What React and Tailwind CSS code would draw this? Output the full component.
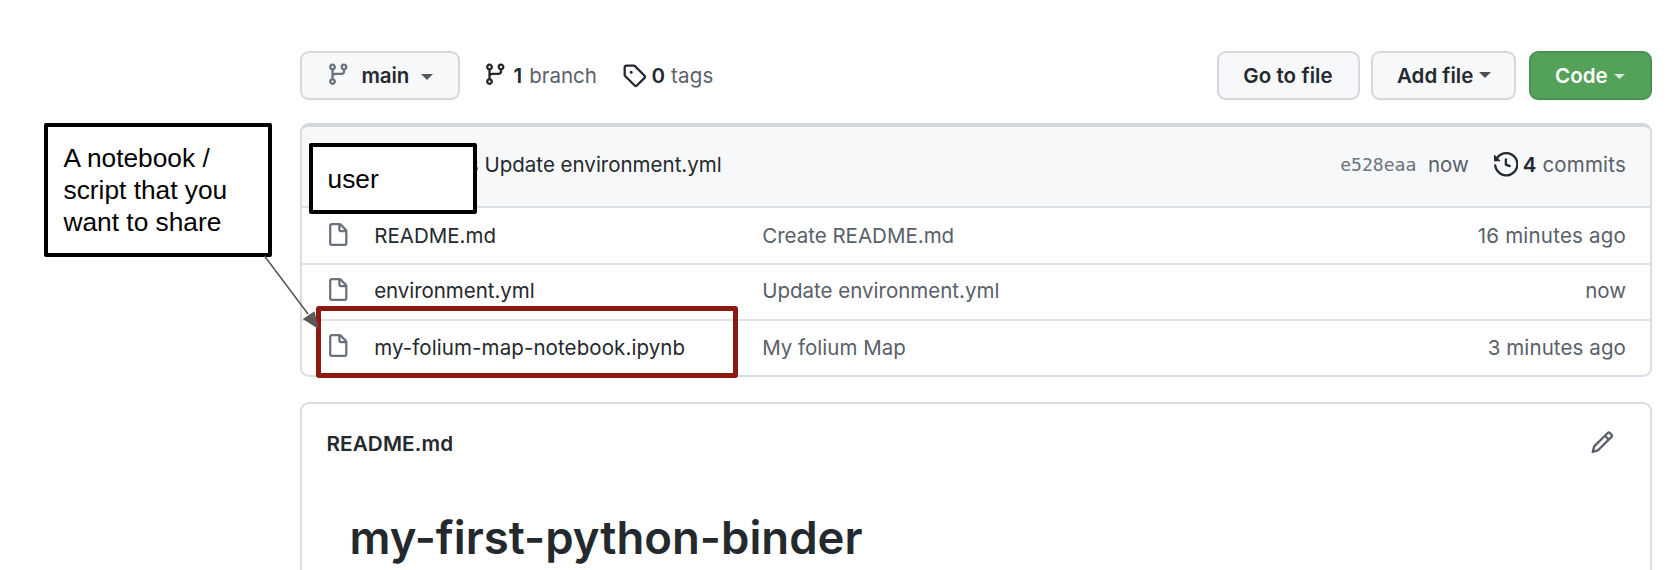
const ICONS = {
  branch:
    "M11.75 2.5a.75.75 0 100 1.5.75.75 0 000-1.5zm-2.25.75a2.25 2.25 0 113 2.122V6A2.5 2.5 0 0110 8.5H6a1 1 0 00-1 1v1.128a2.251 2.251 0 11-1.5 0V5.372a2.25 2.25 0 111.5 0v1.836A2.492 2.492 0 016 7h4a1 1 0 001-1v-.628A2.25 2.25 0 019.5 3.25zM4.25 12a.75.75 0 100 1.5.75.75 0 000-1.5zM3.5 3.25a.75.75 0 111.5 0 .75.75 0 01-1.5 0z",
  tag: "M2.5 7.775V2.75a.25.25 0 01.25-.25h5.025a.25.25 0 01.177.073l6.25 6.25a.25.25 0 010 .354l-5.025 5.025a.25.25 0 01-.354 0l-6.25-6.25a.25.25 0 01-.073-.177zm-1.5 0V2.75C1 1.784 1.784 1 2.75 1h5.025c.464 0 .91.184 1.238.513l6.25 6.25a1.75 1.75 0 010 2.474l-5.026 5.026a1.75 1.75 0 01-2.474 0l-6.25-6.25A1.75 1.75 0 011 7.775zM6 5a1 1 0 100 2 1 1 0 000-2z",
  file: "M3.75 1.5a.25.25 0 00-.25.25v11.5c0 .138.112.25.25.25h8.5a.25.25 0 00.25-.25V6H9.75A1.75 1.75 0 018 4.25V1.5H3.75zm5.75.56v2.19c0 .138.112.25.25.25h2.19L9.5 2.06zM2 1.75C2 .784 2.784 0 3.75 0h5.086c.464 0 .909.184 1.237.513l3.414 3.414c.329.328.513.773.513 1.237v8.086A1.75 1.75 0 0112.25 15h-8.5A1.75 1.75 0 012 13.25V1.75z",
  history:
    "M1.643 3.143L.427 1.927A.25.25 0 000 2.104V5.75c0 .138.112.25.25.25h3.646a.25.25 0 00.177-.427L2.715 4.215a6.5 6.5 0 11-1.18 4.458.75.75 0 10-1.493.154 8.001 8.001 0 101.6-5.684zM7.75 4a.75.75 0 01.75.75v2.992l2.028.812a.75.75 0 01-.557 1.392l-2.5-1A.75.75 0 017 8.25v-3.5A.75.75 0 017.75 4z",
  pencil:
    "M11.013 1.427a1.75 1.75 0 012.474 0l1.086 1.086a1.75 1.75 0 010 2.474l-8.61 8.61c-.21.21-.47.364-.756.445l-3.251.93a.75.75 0 01-.927-.928l.929-3.25a1.75 1.75 0 01.445-.758l8.61-8.61zm1.414 1.06a.25.25 0 00-.354 0L10.811 3.75l1.439 1.44 1.263-1.263a.25.25 0 000-.354l-1.086-1.086zM11.189 6.25L9.75 4.81l-6.286 6.287a.25.25 0 00-.064.108l-.558 1.953 1.953-.558a.249.249 0 00.108-.064l6.286-6.286z",
};

function Icon({ name, className = "" }) {
  return (
    <svg viewBox="0 0 16 16" className={`size-[24.5px] shrink-0 ${className}`} fill="currentColor">
      <path fillRule="evenodd" d={ICONS[name]} />
    </svg>
  );
}

function Caret({ className = "h-[6px] w-[12px]" }) {
  return (
    <svg viewBox="0 0 12 6" preserveAspectRatio="none" className={`shrink-0 ${className}`} fill="currentColor">
      <path d="M0 0h12L6 6z" />
    </svg>
  );
}

const BUTTON_TONES = {
  plain: "border-[#d5d9dd] bg-[#f6f8fa]",
  primary: "border-[#4a934f] bg-[#54a15a] text-white",
};

function Button({ tone = "plain", className = "", children }) {
  return (
    <button
      className={`flex h-[49px] shrink-0 items-center rounded-[9px] border-2 font-semibold shadow-[0_1px_1px_rgba(27,31,35,0.05)] ${BUTTON_TONES[tone]} ${className}`}
    >
      {children}
    </button>
  );
}

const FILES = [
  { name: "README.md", message: "Create README.md", age: "16 minutes ago", row: "h-[56.5px] border-b-2 pt-[1.5px]", tracking: "tracking-[0.02px]", ageTracking: "tracking-[0.2px]" },
  { name: "environment.yml", message: "Update environment.yml", age: "now", row: "h-[56.5px] border-b-2 pb-[2px]", tracking: "tracking-[-0.05px]", ageTracking: "" },
  { name: "my-folium-map-notebook.ipynb", message: "My folium Map", age: "3 minutes ago", row: "h-[55px] pb-[2px]", tracking: "tracking-[0.09px]", ageTracking: "tracking-[0.1px]" },
];

function Toolbar() {
  return (
    <div className="flex h-[49px] items-center">
      <Button className="w-[160px] pl-[24px]">
        <Icon name="branch" className="mt-[-2px] text-[#6a737d]" />
        <span className="ml-[11px] tracking-[-0.1px]">main</span>
        <Caret className="mt-[2px] ml-[12px] h-[6px] w-[12px] text-[#55595e]" />
      </Button>
      <Icon name="branch" className="mt-[-2px] ml-[22.5px]" />
      <span className="ml-[6.5px] font-semibold">1</span>
      <span className="ml-[7px] text-[#586069]">branch</span>
      <Icon name="tag" className="ml-[25px]" />
      <span className="ml-[5px] font-semibold">0</span>
      <span className="ml-[6px] tracking-[0.2px] text-[#586069]">tags</span>
      <div className="ml-auto flex">
        <Button className="w-[143px] justify-center">
          <span className="tracking-[0.1px]">Go to file</span>
        </Button>
        <Button className="ml-[11px] w-[145px] pl-[24.5px]">
          <span>Add file</span>
          <Caret className="mt-[-2px] ml-[6px] h-[6px] w-[12px] text-[#4b4f55]" />
        </Button>
        <Button tone="primary" className="ml-[13.5px] w-[123px] pl-[24px]">
          <span className="tracking-[0.05px]">Code</span>
          <Caret className="mt-[2px] ml-[6px] h-[5px] w-[11px] text-[#d9ebda]" />
        </Button>
      </div>
    </div>
  );
}

function FileTable() {
  return (
    <section className="mt-[23px] h-[254px] overflow-hidden rounded-[9px] border-2 border-t-4 border-[#d8dde3] border-t-[#d1d7dd]">
      <header className="flex h-[81px] items-center border-b-2 border-[#dadfe4] bg-[#f6f8fa] pr-[24px] pb-[4px]">
        <span className="ml-[127px] w-[49.5px] text-right">s</span>
        <span className="ml-[6px]">Update environment.yml</span>
        <span className="ml-auto font-['DejaVu_Sans_Mono',monospace] text-[18.1px] text-[#6a737d]">e528eaa</span>
        <span className="ml-[11.5px] text-[#586069]">now</span>
        <Icon name="history" className="ml-[25px]" />
        <span className="ml-[4.5px] font-semibold">4</span>
        <span className="ml-[6px] tracking-[0.2px] text-[#586069]">commits</span>
      </header>
      {FILES.map((f) => (
        <div key={f.name} className={`flex items-center border-[#dfe3e8] pr-[24px] pl-[24px] ${f.row}`}>
          <Icon name="file" className="mt-[-2px] text-[#6a737d]" />
          <span className={`ml-[23.7px] w-[388px] ${f.tracking}`}>{f.name}</span>
          <span className="text-[#586069]">{f.message}</span>
          <span className={`ml-auto text-[#586069] ${f.ageTracking}`}>{f.age}</span>
        </div>
      ))}
    </section>
  );
}

function Readme() {
  return (
    <section className="mt-[25px] h-[190px] rounded-t-[9px] border-2 border-b-0 border-[#d8dde3] pr-[36px] pl-[24.5px]">
      <div className="flex h-[78px] items-center justify-between">
        <h2 className="pt-[2px] text-[20.7px] font-semibold tracking-[0.1px]">README.md</h2>
        <Icon name="pencil" className="mt-[-1px] text-[#586069]" />
      </div>
      <h1 className="mt-[28px] ml-[23px] text-[45.5px] leading-[56px] font-semibold whitespace-nowrap">
        my-first-python-binder
      </h1>
    </section>
  );
}

function Annotations() {
  return (
    <div className="font-['Liberation_Sans',Arial,sans-serif] text-[26.3px] text-black">
      <div className="absolute top-[123px] left-[44px] h-[134px] w-[228px] rounded-[2px] border-4 border-black bg-white pt-[15px] pl-[15.5px] leading-[32px]">
        A notebook /<br />
        script that you
        <br />
        want to share
      </div>
      <div className="absolute top-[143px] left-[308.5px] flex h-[70.5px] w-[168.5px] items-center rounded-[2px] border-4 border-black bg-white pt-[2px] pl-[15px]">
        user
      </div>
      <div className="absolute top-[305.5px] left-[316px] h-[72px] w-[421.5px] rounded-[3px] border-5 border-[#8c1a11]" />
      <svg viewBox="255 250 70 90" className="absolute top-[250px] left-[255px] h-[90px] w-[70px]">
        <path d="M264.5 256L308 314" stroke="#595959" strokeWidth="1.6" fill="none" />
        <path d="M318.4 329L302.8 319L314.6 311.2z" fill="#595959" />
      </svg>
    </div>
  );
}

export default function App() {
  return (
    <main className="relative h-[570px] w-[1670px] overflow-hidden bg-white pt-[51px] pl-[300px] font-['Inter',sans-serif] text-[20.5px] leading-[30px] text-[#24292e]">
      <div className="w-[1352px]">
        <Toolbar />
        <FileTable />
        <Readme />
      </div>
      <Annotations />
    </main>
  );
}
